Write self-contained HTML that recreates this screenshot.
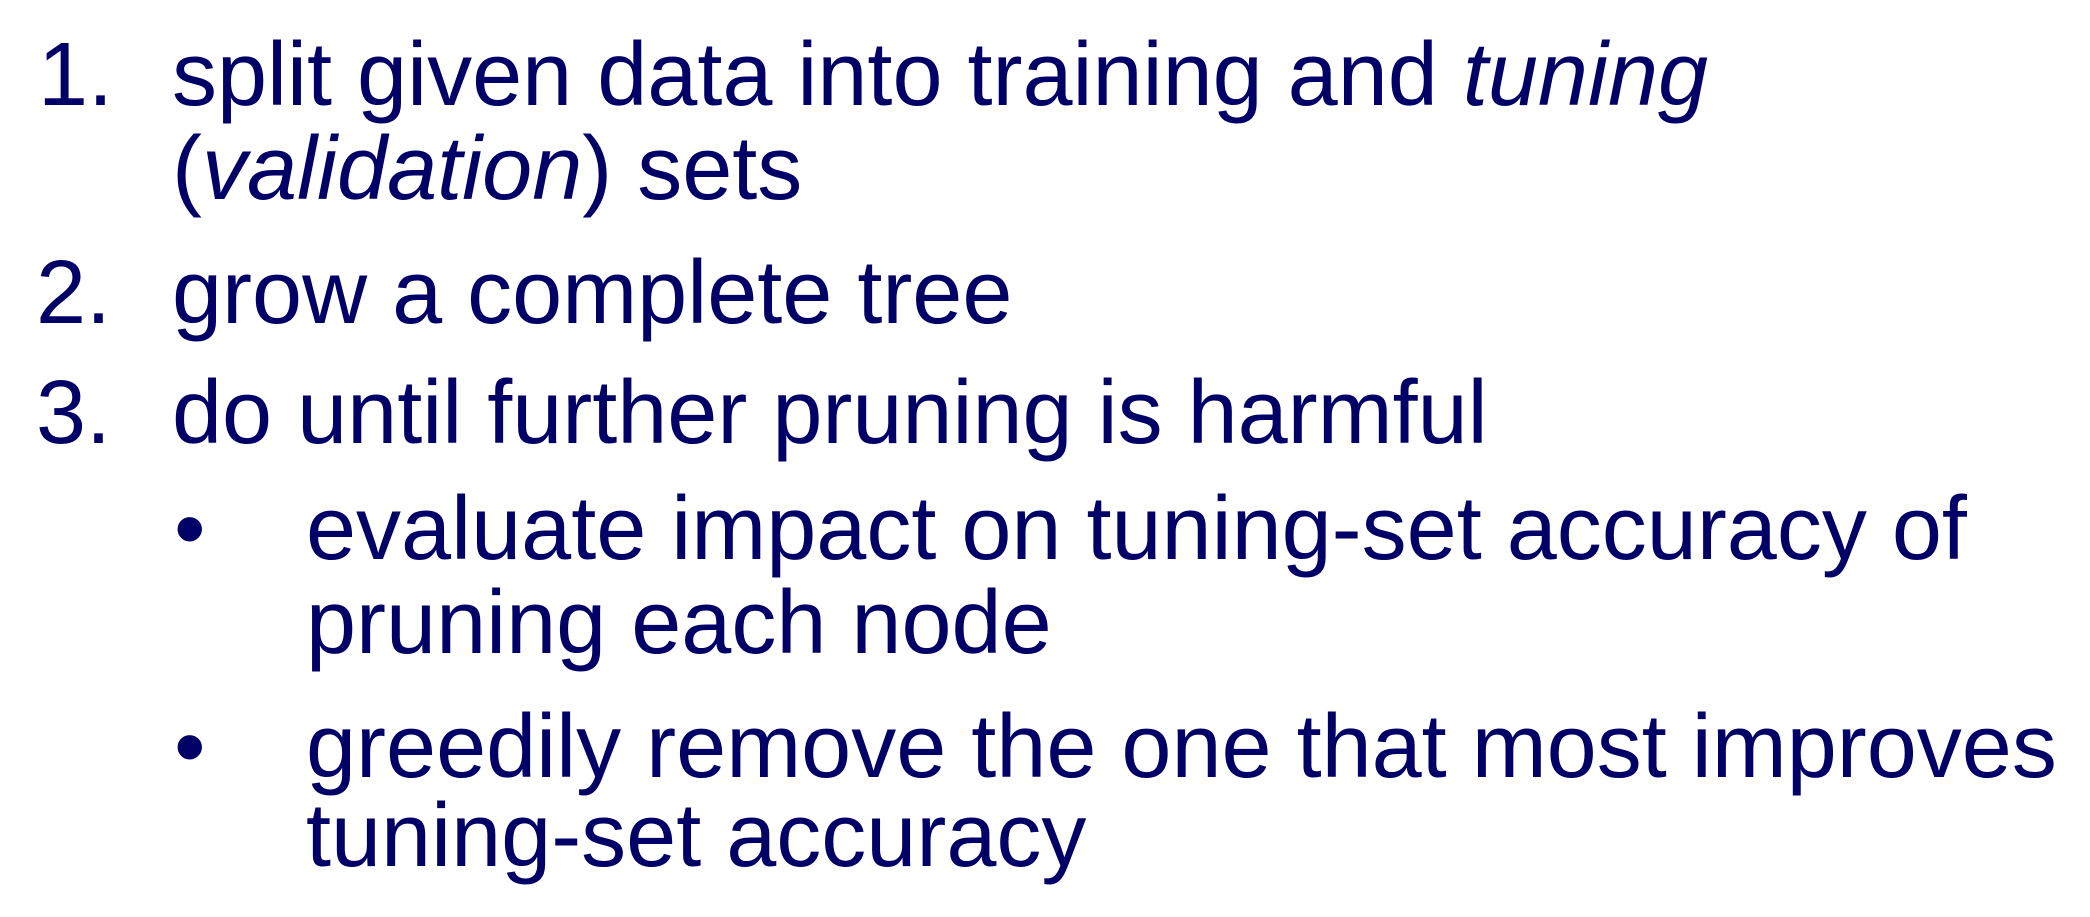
<!DOCTYPE html>
<html><head><meta charset="utf-8"><style>
html,body{margin:0;padding:0;background:#fff;}
body{width:2090px;height:917px;position:relative;overflow:hidden;font-family:"Liberation Sans",Arial,sans-serif;color:#000066;font-size:90px;}
.l{position:absolute;white-space:nowrap;line-height:1;}
</style></head><body>
<div class="l" style="left:38px;top:30px">1.</div>
<div class="l" style="left:172px;top:30px">split given data into training and <i>tuning</i></div>
<div class="l" style="left:172px;top:124px">(<i>validation</i>) sets</div>
<div class="l" style="left:36px;top:248px">2.</div>
<div class="l" style="left:172px;top:248px">grow a complete tree</div>
<div class="l" style="left:36px;top:368px">3.</div>
<div class="l" style="left:172px;top:368px">do until further pruning is harmful</div>
<div class="l" style="left:174px;top:484px">•</div>
<div class="l" style="left:306px;top:484px">evaluate impact on tuning-set accuracy of</div>
<div class="l" style="left:306px;top:578px">pruning each node</div>
<div class="l" style="left:174px;top:702px">•</div>
<div class="l" style="left:306px;top:702px">greedily remove the one that most improves</div>
<div class="l" style="left:306px;top:791px">tuning-set accuracy</div>
</body></html>
